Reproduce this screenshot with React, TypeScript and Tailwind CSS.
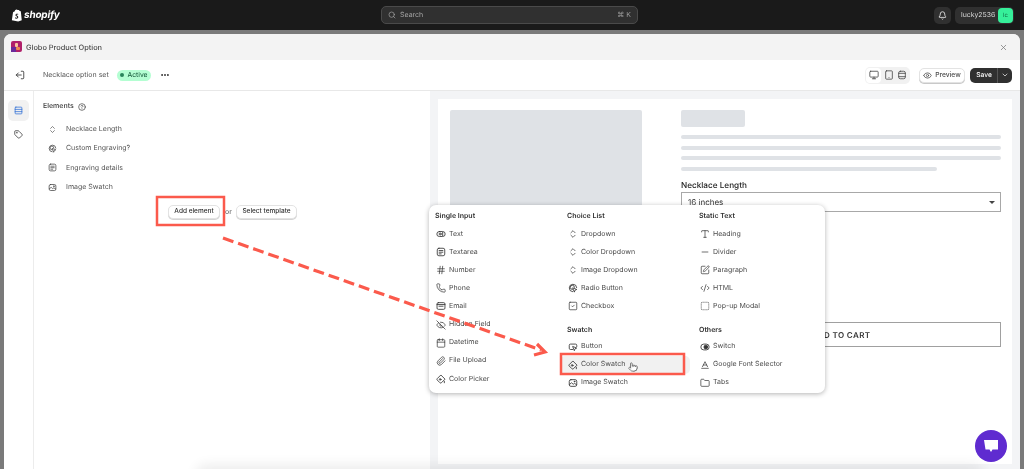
import React from "react";
import {
  Search, Bell, X, LogOut, Monitor, Tablet, Eye, ChevronDown, Rows3, Tag, CircleHelp,
  ChevronsUpDown, Hash, Phone, EyeOff, Calendar,
  Paperclip, SquareCheck, Type, Minus, SquarePen, CodeXml, SquareDashed,
  Baseline, Folder, Pointer, MoreHorizontal,
} from "lucide-react";

type IconType = React.ComponentType<{ className?: string; strokeWidth?: number }>;
type Item = { label: string; Icon: IconType; hover?: boolean };

const svgProps = { viewBox: "0 0 24 24", fill: "none", stroke: "currentColor", strokeWidth: 2, strokeLinecap: "round" as const, strokeLinejoin: "round" as const };

const PillEye: IconType = ({ className }) => (
  <svg className={className} {...svgProps}>
    <rect x="2" y="6" width="20" height="12" rx="6" />
    <circle cx="10" cy="12" r="2.500" />
    <path d="M16 8v8" />
  </svg>
);
const NoteBox: IconType = ({ className }) => (
  <svg className={className} {...svgProps}>
    <rect x="3" y="3" width="18" height="18" rx="4" />
    <path d="M7.500 8.500h9M7.500 12.500h9M7.500 16.500h5" />
  </svg>
);
const MailBox: IconType = ({ className }) => (
  <svg className={className} {...svgProps}>
    <rect x="2.500" y="4" width="19" height="16" rx="3" />
    <path d="M2.500 8.500h19M7 12.500h10" />
  </svg>
);
const Swatch: IconType = ({ className }) => (
  <svg className={className} {...svgProps}>
    <path d="M11 3 3 11a2.500 2.500 0 0 0 0 3.500l6.500 6.500a2.500 2.500 0 0 0 3.500 0L21 13Z" />
    <circle cx="10" cy="13" r="2" />
    <path d="M20 17.500v3.500" />
  </svg>
);
const RadioClick: IconType = ({ className }) => (
  <svg className={className} {...svgProps}>
    <path d="M11 21a9 9 0 1 1 10-10" />
    <path d="M10.500 15.500a5 5 0 1 1 5-5" />
    <path d="m12 12 9 3.500-4 1.500-1.500 4Z" />
  </svg>
);
const ButtonClick: IconType = ({ className }) => (
  <svg className={className} {...svgProps}>
    <path d="M11 18H6a3 3 0 0 1-3-3V8a3 3 0 0 1 3-3h12a3 3 0 0 1 3 3v3" />
    <path d="m12 11 9 3.500-4 1.500-1.500 4Z" />
  </svg>
);
const Picture: IconType = ({ className }) => (
  <svg className={className} {...svgProps}>
    <rect x="3" y="4" width="18" height="16" rx="4" />
    <path d="m3.500 15.500 5-4 4 3.500 3-2 5 3" />
    <circle cx="15.500" cy="8.500" r="1" />
  </svg>
);
const Toggle: IconType = ({ className }) => (
  <svg className={className} viewBox="0 0 24 24" fill="none" stroke="currentColor" strokeWidth={2}>
    <rect x="2" y="5" width="20" height="14" rx="7" />
    <circle cx="14" cy="12" r="4.500" fill="currentColor" />
  </svg>
);
const Phoneish: IconType = ({ className }) => (
  <svg className={className} {...svgProps}>
    <rect x="4" y="3" width="16" height="18" rx="4" />
    <path d="M4 8h16M4 16h16" />
  </svg>
);

const single: Item[] = [
  { label: "Text", Icon: PillEye },
  { label: "Textarea", Icon: NoteBox },
  { label: "Number", Icon: Hash },
  { label: "Phone", Icon: Phone },
  { label: "Email", Icon: MailBox },
  { label: "Hidden Field", Icon: EyeOff },
  { label: "Datetime", Icon: Calendar },
  { label: "File Upload", Icon: Paperclip },
  { label: "Color Picker", Icon: Swatch },
];
const choice: Item[] = [
  { label: "Dropdown", Icon: ChevronsUpDown },
  { label: "Color Dropdown", Icon: ChevronsUpDown },
  { label: "Image Dropdown", Icon: ChevronsUpDown },
  { label: "Radio Button", Icon: RadioClick },
  { label: "Checkbox", Icon: SquareCheck },
];
const swatch: Item[] = [
  { label: "Button", Icon: ButtonClick },
  { label: "Color Swatch", Icon: Swatch, hover: true },
  { label: "Image Swatch", Icon: Picture },
];
const statics: Item[] = [
  { label: "Heading", Icon: Type },
  { label: "Divider", Icon: Minus },
  { label: "Paragraph", Icon: SquarePen },
  { label: "HTML", Icon: CodeXml },
  { label: "Pop-up Modal", Icon: SquareDashed },
];
const others: Item[] = [
  { label: "Switch", Icon: Toggle },
  { label: "Google Font Selector", Icon: Baseline },
  { label: "Tabs", Icon: Folder },
];
const elements: Item[] = [
  { label: "Necklace Length", Icon: ChevronsUpDown },
  { label: "Custom Engraving?", Icon: RadioClick },
  { label: "Engraving details", Icon: NoteBox },
  { label: "Image Swatch", Icon: Picture },
];

function MenuRows({ items }: { items: Item[] }) {
  return (
    <div className="flex flex-col">
      {items.map(({ label, Icon, hover }) => (
        <div
          key={label}
          className={`flex h-[18.1px] items-center gap-[3px] rounded-[5px] text-[7px] text-[#4a4a4a] ${hover ? "-ml-[7px] w-[130px] bg-[#f1f1f1] pl-[8px]" : "pl-[1px]"}`}
        >
          <Icon className="h-[10px] w-[10px] shrink-0 text-[#333333]" strokeWidth={1.7} />
          <span>{label}</span>
        </div>
      ))}
    </div>
  );
}

function MenuHead({ children }: { children: React.ReactNode }) {
  return <div className="flex h-[15px] items-center text-[7px] font-semibold text-[#303030]">{children}</div>;
}

export default function App() {
  return (
    <div
      className="relative flex h-[469px] w-[1024px] flex-col overflow-hidden bg-[#1a1a1a] antialiased [text-rendering:geometricPrecision] [will-change:transform]"
      style={{ fontFamily: "Inter, 'Liberation Sans', sans-serif" }}
    >
      {/* Shopify top bar */}
      <header className="flex h-[30px] shrink-0 items-center justify-between pl-[11px] pr-[10px]">
        <div className="flex w-[370px] items-center gap-[2px]">
          <svg width="11" height="13" viewBox="0 0 13 15">
            <path d="M1 13.2 2.4 3.6C3 3.2 3.6 3 4.2 2.8 4.6 1.3 5.5.3 6.6.3c.6 0 1 .3 1.3.8l1.4-.2 1 1.3 1.3.2L12.7 13 8.5 14.7Z" fill="#ffffff" />
            <path d="M8.7 5.6c-.5-.2-1-.3-1.5-.3-1.3 0-2 .8-2 1.700 0 1.500 2.100 1.500 2.100 2.500 0 .4-.3.7-.8.7-.6 0-1.200-.4-1.500-.6l-.3 1.100c.4.300 1.100.6 1.800.6 1.200 0 2.100-.8 2.100-2 0-1.700-2.100-1.700-2.100-2.500 0-.3.2-.6.8-.6.4 0 .8.100 1.100.2Z" fill="#1a1a1a" />
          </svg>
          <span className="text-[10px] font-bold italic leading-none tracking-[-0.2px] text-white">shopify</span>
        </div>
        <div className="flex h-[18px] w-[257px] items-center rounded-[5px] border border-[#4a4a4a] bg-[#303030] pl-[6px] pr-[6px] text-[7px] text-[#a8a8a8]">
          <Search className="mr-[4px] h-[8px] w-[8px]" />
          <span className="pt-[1px]">Search</span>
          <span className="ml-auto pt-[1px] text-[#9a9a9a]">⌘ K</span>
        </div>
        <div className="flex w-[376px] items-center justify-end gap-[4px]">
          <div className="flex h-[17px] w-[17px] items-center justify-center rounded-[5px] bg-[#303030]">
            <Bell className="h-[9px] w-[9px] text-white" />
          </div>
          <div className="flex h-[17px] w-[59px] items-center justify-between rounded-[5px] bg-[#303030] pl-[6px] pr-[1px] text-[6.9px] text-[#d8d8d8]">
            <span>lucky2536</span>
            <span className="flex h-[15px] w-[15px] items-center justify-center rounded-[4px] bg-[#36f09a] text-[6px] text-[#0f6d45]">lc</span>
          </div>
        </div>
      </header>

      {/* dimmed backdrop + modal window */}
      <div className="flex min-h-0 flex-1 flex-col bg-[#7a7a7a] px-[4px] pt-[4px]">
        <div className="flex min-h-0 flex-1 flex-col overflow-hidden rounded-t-[7px] bg-white">
          <div className="flex h-[26px] shrink-0 items-center justify-between bg-[#f3f3f3] pl-[7px] pr-[12px]">
            <div className="flex items-center gap-[4px]">
              <svg width="11" height="11" viewBox="0 0 11 11">
                <rect width="11" height="11" rx="2" fill="#b0206a" />
                <rect x="0" y="6" width="5" height="5" fill="#6a2a9a" />
                <rect x="4" y="2" width="3" height="4" rx="1" fill="#f7c6a0" />
                <rect x="5" y="6" width="4" height="3" rx="1" fill="#f08a50" />
              </svg>
              <span className="pt-[1px] text-[7.4px] font-medium text-[#4a4a4a]">Globo Product Option</span>
            </div>
            <X className="h-[9px] w-[9px] text-[#7a7a7a]" />
          </div>

          <div className="flex h-[31px] shrink-0 items-center border-b border-[#e8e8e8] pl-[11px] pr-[8px]">
            <LogOut className="h-[10px] w-[10px] rotate-180 text-[#303030]" strokeWidth={2} />
            <span className="ml-[18px] w-[65px] whitespace-nowrap text-[7px] text-[#555555]">Necklace option set</span>
            <span className="ml-[9px] flex h-[11px] w-[34px] items-center justify-center gap-[3px] rounded-full bg-[#b4fed2] text-[6.8px] text-[#0c5132]">
              <span className="h-[4px] w-[4px] rounded-full bg-[#29845a]" />
              Active
            </span>
            <MoreHorizontal className="ml-[9px] h-[10px] w-[10px] text-[#303030]" strokeWidth={2.5} />
            <div className="ml-auto flex h-[17px] w-[45px] items-center justify-between rounded-[5px] bg-[#f1f1f1] p-[1px] pr-[3px]">
              <span className="flex h-[15px] w-[15px] items-center justify-center rounded-[4px] bg-white">
                <Monitor className="h-[10px] w-[10px] text-[#4a4a4a]" />
              </span>
              <Tablet className="h-[10px] w-[10px] text-[#4a4a4a]" />
              <Phoneish className="h-[10px] w-[10px] text-[#4a4a4a]" />
            </div>
            <button className="ml-[9px] flex h-[15px] w-[46px] items-center justify-center gap-[3px] rounded-[5px] border border-[#e3e3e3] bg-white text-[6.7px] font-medium text-[#4a4a4a] shadow-[0_1px_0_#c9c9c9]">
              <Eye className="h-[9px] w-[9px]" />
              Preview
            </button>
            <div className="ml-[5px] flex h-[15px] w-[42px] items-center rounded-[5px] bg-[#303030] text-[6.7px] font-medium text-white">
              <span className="flex-1 pl-[1px] text-center">Save</span>
              <span className="flex h-full w-[15px] items-center justify-center border-l border-[#555555]">
                <ChevronDown className="h-[8px] w-[8px]" />
              </span>
            </div>
          </div>

          <div className="flex min-h-0 flex-1">
            <aside className="flex w-[30px] shrink-0 flex-col items-center gap-[9px] border-r border-[#ececec] pt-[9px]">
              <span className="flex h-[21px] w-[21px] items-center justify-center rounded-[5px] bg-[#f1f1f1]">
                <Rows3 className="h-[9px] w-[9px] text-[#2f6fd6]" strokeWidth={2} />
              </span>
              <Tag className="h-[9px] w-[9px] text-[#303030]" strokeWidth={2} />
            </aside>

            <section className="flex w-[396px] shrink-0 flex-col pl-[9px] pt-[10px]">
              <div className="flex h-[11px] items-center gap-[4px] text-[7px] font-medium text-[#3a3a3a]">
                Elements
                <CircleHelp className="h-[8px] w-[8px]" />
              </div>
              <div className="mt-[7.5px] flex flex-col">
                {elements.map(({ label, Icon }) => (
                  <div key={label} className="flex h-[19.33px] items-center pl-[5px] text-[7px] text-[#555555]">
                    <Icon className="h-[9px] w-[9px] text-[#444444]" strokeWidth={1.7} />
                    <span className="ml-[9px]">{label}</span>
                  </div>
                ))}
              </div>
              <div className="ml-[125px] mt-[8.5px] flex items-center text-[7px] text-[#555555]">
                <button className="h-[14px] w-[52px] rounded-[5px] border border-[#e3e3e3] bg-white text-[6.5px] font-medium text-[#303030] shadow-[0_1px_0_#d4d4d4]">Add element</button>
                <span className="ml-[5px] w-[6px]">or</span>
                <button className="ml-[5px] h-[14px] w-[61px] rounded-[5px] border border-[#e3e3e3] bg-white text-[6.5px] font-medium text-[#303030] shadow-[0_1px_0_#d4d4d4]">Select template</button>
              </div>
            </section>

            <section className="min-w-0 flex-1 bg-[#f3f4f6] pb-[5px] pl-[8px] pr-[8px] pt-[8px]">
              <div className="flex h-full bg-white pl-[12px] pr-[11px] pt-[11px]">
                <div className="h-[200px] w-[192px] shrink-0 rounded-[2px] bg-[#dfe2e6]" />
                <div className="ml-[39px] flex min-w-0 flex-1 flex-col">
                  <div className="h-[17px] w-[64px] rounded-[2px] bg-[#dfe2e6]" />
                  <div className="mt-[8px] h-[4px] rounded-[2px] bg-[#dfe2e6]" />
                  <div className="mt-[7px] h-[4px] rounded-[2px] bg-[#dfe2e6]" />
                  <div className="mt-[6px] h-[4px] rounded-[2px] bg-[#dfe2e6]" />
                  <div className="mt-[7px] h-[4px] w-[256px] rounded-[2px] bg-[#dfe2e6]" />
                  <div className="mt-[9px] text-[8.2px] font-medium leading-[11px] text-[#222222]">Necklace Length</div>
                  <div className="mt-[1px] flex h-[20px] items-center justify-between border border-[#a8a8a8] pl-[6px] pr-[5px] text-[8px] text-[#333333]">
                    <span>16 inches</span>
                    <span className="h-0 w-0 border-x-[3px] border-t-[3px] border-x-transparent border-t-[#444444]" />
                  </div>
                  <div className="mt-[110px] flex h-[25px] items-center justify-center border border-[#a0a0a0] text-[8px] font-semibold tracking-[0.4px] text-[#333333]">ADD TO CART</div>
                </div>
              </div>
            </section>
          </div>
        </div>
      </div>

      {/* Bottom shadow bleed */}
      <div className="absolute bottom-[-14px] left-[200px] h-[14px] w-[780px] rounded-full shadow-[0_0_12px_5px_rgba(0,0,0,0.07)]" />

      {/* Element picker popover */}
      <div className="absolute left-[429px] top-[205px] grid h-[188px] w-[396px] grid-cols-[132px_132px_1fr] rounded-[7px] bg-white pl-[6px] pt-[4px] shadow-[0_1px_5px_rgba(0,0,0,0.3)]">
        <div>
          <div className="mb-[1px]"><MenuHead>Single Input</MenuHead></div>
          <MenuRows items={single} />
        </div>
        <div>
          <div className="mb-[1px]"><MenuHead>Choice List</MenuHead></div>
          <MenuRows items={choice} />
          <div className="mt-[7px]">
            <MenuHead>Swatch</MenuHead>
            <MenuRows items={swatch} />
          </div>
        </div>
        <div>
          <div className="mb-[1px]"><MenuHead>Static Text</MenuHead></div>
          <MenuRows items={statics} />
          <div className="mt-[7px]">
            <MenuHead>Others</MenuHead>
            <MenuRows items={others} />
          </div>
        </div>
      </div>

      {/* Cursor */}
      <Pointer className="absolute left-[628px] top-[362px] h-[10px] w-[10px] fill-white text-[#555555]" strokeWidth={1.8} />

      {/* Annotation drawing */}
      <svg className="pointer-events-none absolute left-0 top-0" width="1024" height="469" viewBox="0 0 1024 469">
        <rect x="157" y="197" width="67" height="28" fill="none" stroke="#fb5a4c" strokeWidth="2.500" />
        <rect x="561" y="354" width="123" height="20" fill="none" stroke="#fb5a4c" strokeWidth="2.500" />
        <line x1="223" y1="238" x2="541" y2="350" stroke="#fb5a4c" strokeWidth="3.200" strokeDasharray="11 5" />
        <path d="M537 344 545 352 534 355" fill="none" stroke="#fb5a4c" strokeWidth="3.200" />
      </svg>

      {/* Chat launcher */}
      <div className="absolute left-[975px] top-[430px] flex h-[32px] w-[32px] items-center justify-center rounded-full bg-[#5f2bd0]">
        <svg width="16" height="14" viewBox="0 0 16 14">
          <path d="M1 1h14v9.500H9.500L8 13 6.500 10.500H2.500Z" fill="#ffffff" />
        </svg>
      </div>
    </div>
  );
}
